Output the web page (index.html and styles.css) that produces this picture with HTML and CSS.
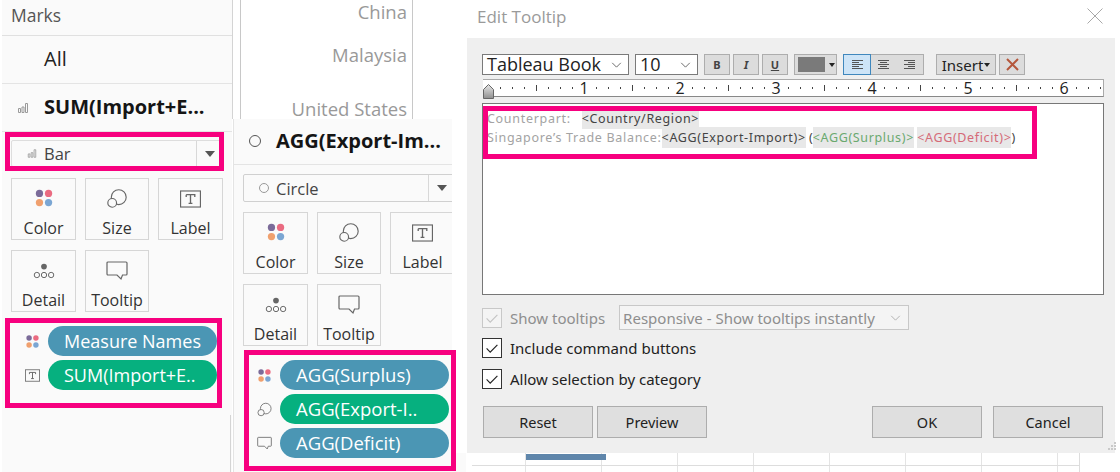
FILE: index.html
```html
<!DOCTYPE html>
<html lang="en">
<head>
<meta charset="utf-8">
<title>Edit Tooltip</title>
<link rel="stylesheet" href="styles.css">
</head>
<body>
<svg class="defs" width="0" height="0" aria-hidden="true">
  <defs>
    <symbol id="i-bar" viewBox="0 0 12 10"><path d="M1.5 5.5h2v4h-2zM5 4h2v5.500h-2zM8.500 .5h2v9h-2z" fill="none" stroke="#9a9a9a"/></symbol>
    <symbol id="i-color" viewBox="0 0 22 22"><circle cx="6" cy="6" r="4" fill="#7b6b99"/><circle cx="16" cy="6" r="4" fill="#ea6b81"/><circle cx="6" cy="16" r="4" fill="#f0a06e"/><circle cx="16" cy="16" r="4" fill="#7ba6d3"/></symbol>
    <symbol id="i-size" viewBox="0 0 24 24"><circle cx="14" cy="10.500" r="8.500" fill="none" stroke="#666" stroke-width="1.300"/><circle cx="6.500" cy="17" r="5" fill="#fafafa" stroke="#666" stroke-width="1.300"/></symbol>
    <symbol id="i-label" viewBox="0 0 22 18"><rect x=".6" y=".6" width="20.800" height="16.800" fill="none" stroke="#666" stroke-width="1.200"/><path d="M6.500 4.500h9v2.500M6.500 7V4.500M11 4.500v9M9 13.500h4" fill="none" stroke="#666" stroke-width="1.400"/></symbol>
    <symbol id="i-detail" viewBox="0 0 24 18"><circle cx="12" cy="4" r="3.200" fill="#666"/><circle cx="4" cy="13.500" r="3" fill="none" stroke="#666" stroke-width="1.100"/><circle cx="12" cy="13.500" r="3" fill="none" stroke="#666" stroke-width="1.100"/><circle cx="20" cy="13.500" r="3" fill="none" stroke="#666" stroke-width="1.100"/></symbol>
    <symbol id="i-tooltip" viewBox="0 0 22 20"><path d="M2 1h18a1 1 0 0 1 1 1v11a1 1 0 0 1-1 1h-3.500l-1.500 4-4-4H2a1 1 0 0 1-1-1V2a1 1 0 0 1 1-1z" fill="none" stroke="#666" stroke-width="1.200"/></symbol>
    <symbol id="i-check" viewBox="0 0 20 20"><path d="M4 10.500l4 4 8-8" fill="none" stroke="currentColor" stroke-width="1.300"/></symbol>
    <symbol id="i-chev" viewBox="0 0 12 7"><path d="M1 1l5 5 5-5" fill="none" stroke="currentColor" stroke-width="1"/></symbol>
  </defs>
</svg>

<main class="canvas">
  <section class="marks marks-one">
    <div class="marks-title">Marks</div>
    <div class="marks-row">All</div>
    <div class="marks-row marks-row-bold"><svg class="row-icon"><use href="#i-bar"/></svg>SUM(Import+E...</div>
    <div class="marks-body">
      <div class="mark-select"><svg class="sel-icon"><use href="#i-bar"/></svg><span class="sel-text">Bar</span><span class="sel-arrow"></span></div>
      <div class="mark-grid">
        <div class="mark-btn"><svg class="mi mi-color"><use href="#i-color"/></svg>Color</div>
        <div class="mark-btn"><svg class="mi mi-size"><use href="#i-size"/></svg>Size</div>
        <div class="mark-btn"><svg class="mi mi-label"><use href="#i-label"/></svg>Label</div>
        <div class="mark-btn"><svg class="mi mi-detail"><use href="#i-detail"/></svg>Detail</div>
        <div class="mark-btn"><svg class="mi mi-tooltip"><use href="#i-tooltip"/></svg>Tooltip</div>
      </div>
      <div class="pills pills-one">
        <div class="pill-row"><svg class="pi"><use href="#i-color"/></svg><span class="pill pill-blue">Measure Names</span></div>
        <div class="pill-row"><svg class="pi"><use href="#i-label"/></svg><span class="pill pill-green">SUM(Import+E..</span></div>
      </div>
    </div>
  </section>

  <section class="axis">
    <div class="axis-label axis-china">China</div>
    <div class="axis-label axis-malaysia">Malaysia</div>
    <div class="axis-label axis-us">United States</div>
  </section>

  <section class="marks marks-two">
    <div class="marks-row marks-row-bold marks-row-first"><span class="ring"></span>AGG(Export-Im...</div>
    <div class="marks-body">
      <div class="mark-select"><span class="sel-ring"></span><span class="sel-text">Circle</span><span class="sel-arrow"></span></div>
      <div class="mark-grid">
        <div class="mark-btn"><svg class="mi mi-color"><use href="#i-color"/></svg>Color</div>
        <div class="mark-btn"><svg class="mi mi-size"><use href="#i-size"/></svg>Size</div>
        <div class="mark-btn"><svg class="mi mi-label"><use href="#i-label"/></svg>Label</div>
        <div class="mark-btn"><svg class="mi mi-detail"><use href="#i-detail"/></svg>Detail</div>
        <div class="mark-btn"><svg class="mi mi-tooltip"><use href="#i-tooltip"/></svg>Tooltip</div>
      </div>
      <div class="pills pills-two">
        <div class="pill-row"><svg class="pi"><use href="#i-color"/></svg><span class="pill pill-blue">AGG(Surplus)</span></div>
        <div class="pill-row"><svg class="pi"><use href="#i-size"/></svg><span class="pill pill-green">AGG(Export-I..</span></div>
        <div class="pill-row"><svg class="pi"><use href="#i-tooltip"/></svg><span class="pill pill-blue">AGG(Deficit)</span></div>
      </div>
    </div>
  </section>

  <section class="sheet">
    <div class="sheet-bar"></div>
    <div class="sheet-line"></div>
  </section>

  <section class="dialog">
    <header class="dialog-head">
      <span class="dialog-title">Edit Tooltip</span>
      <svg class="dialog-close" viewBox="0 0 16 16"><path d="M.5.500l15 15M15.500.500l-15 15" stroke="#a8a8a8" stroke-width="1" fill="none"/></svg>
    </header>
    <div class="dialog-body">
      <div class="toolbar">
        <div class="tb-select tb-font"><span>Tableau Book</span><svg class="chev"><use href="#i-chev"/></svg></div>
        <div class="tb-select tb-size"><span>10</span><svg class="chev"><use href="#i-chev"/></svg></div>
        <div class="tb-btn tb-b">B</div>
        <div class="tb-btn tb-i">I</div>
        <div class="tb-btn tb-u">U</div>
        <div class="tb-color"><span class="swatch"></span><span class="caret"></span></div>
        <div class="tb-align">
          <span class="al al-active"><svg viewBox="0 0 11 9"><path d="M0 .5h11M0 2.500h7M0 4.500h11M0 6.500h7M0 8.500h11" stroke="#555"/></svg></span>
          <span class="al"><svg viewBox="0 0 11 9"><path d="M0 .5h11M2 2.500h7M0 4.500h11M2 6.500h7M0 8.500h11" stroke="#555"/></svg></span>
          <span class="al"><svg viewBox="0 0 11 9"><path d="M0 .5h11M4 2.500h7M0 4.500h11M4 6.500h7M0 8.500h11" stroke="#555"/></svg></span>
        </div>
        <div class="tb-insert">Insert<span class="caret"></span></div>
        <div class="tb-del"><svg viewBox="0 0 13 13"><path d="M1 1l11 11M12 1L1 12" stroke="#b5573c" stroke-width="2"/></svg></div>
      </div>
      <svg class="ruler">
        <defs>
          <pattern id="ticks" x="5" y="0" width="96" height="16" patternUnits="userSpaceOnUse">
            <path d="M12.500 7v2M24.500 7v2M36.500 7v2M60.500 7v2M72.500 7v2M84.500 7v2" stroke="#444"/>
            <path d="M48.500 5v6" stroke="#444"/>
          </pattern>
          <linearGradient id="marker" x1="0" y1="0" x2="0" y2="1"><stop offset="0" stop-color="#e8e8e8"/><stop offset="1" stop-color="#8f8f8f"/></linearGradient>
        </defs>
        <rect x="5" width="616" height="16" fill="url(#ticks)"/>
        <g class="ruler-num">
          <rect x="93" y="1" width="16" height="14" fill="#fff"/><rect x="189" y="1" width="16" height="14" fill="#fff"/><rect x="285" y="1" width="16" height="14" fill="#fff"/><rect x="381" y="1" width="16" height="14" fill="#fff"/><rect x="477" y="1" width="16" height="14" fill="#fff"/><rect x="573" y="1" width="16" height="14" fill="#fff"/>
          <text x="101" y="14">1</text><text x="197" y="14">2</text><text x="293" y="14">3</text><text x="389" y="14">4</text><text x="485" y="14">5</text><text x="581" y="14">6</text>
        </g>
        <path d="M5 4.500l5 5v9h-10v-9z" transform="translate(.5 0)" fill="url(#marker)" stroke="#666"/>
      </svg>
      <div class="editor">
        <div class="ed-line"><span class="ed-gray">Counterpart:</span><span class="ed-gap"></span><span class="ed-field">&lt;Country/Region&gt;</span></div>
        <div class="ed-line"><span class="ed-gray">Singapore’s Trade Balance:</span><span class="ed-field">&lt;AGG(Export-Import)&gt;</span><span class="ed-dark"> (</span><span class="ed-field ed-green">&lt;AGG(Surplus)&gt;</span><span class="ed-dark"> </span><span class="ed-field ed-red">&lt;AGG(Deficit)&gt;</span><span class="ed-dark">)</span></div>
      </div>
      <div class="opt opt-first">
        <span class="check check-off"><svg><use href="#i-check"/></svg></span>
        <span class="opt-text opt-muted">Show tooltips</span>
        <div class="resp"><span>Responsive - Show tooltips instantly</span><svg class="chev"><use href="#i-chev"/></svg></div>
      </div>
      <div class="opt opt-second"><span class="check"><svg><use href="#i-check"/></svg></span><span class="opt-text">Include command buttons</span></div>
      <div class="opt opt-third"><span class="check"><svg><use href="#i-check"/></svg></span><span class="opt-text">Allow selection by category</span></div>
      <div class="actions">
        <div class="act">Reset</div>
        <div class="act">Preview</div>
        <div class="act act-ok">OK</div>
        <div class="act">Cancel</div>
      </div>
    </div>
    <svg class="grip" viewBox="0 0 10 10"><path d="M8 1h2v2H8zM5 4h2v2H5zM8 4h2v2H8zM2 7h2v2H2zM5 7h2v2H5zM8 7h2v2H8z" fill="#c9c9c9"/></svg>
  </section>

  <div class="mk mk-1"></div>
  <div class="mk mk-2"></div>
  <div class="mk mk-3"></div>
  <div class="mk mk-4"></div>
</main>
</body>
</html>
```
FILE: styles.css
```css
* { box-sizing: border-box; }
html, body { margin: 0; padding: 0; background: #fff; }
.defs { position: absolute; }
.canvas {
  position: relative;
  width: 1120px;
  height: 472px;
  overflow: hidden;
  background: #fff;
  font-family: "Open Sans", "Liberation Sans", sans-serif;
}

/* Marks cards */
.marks { position: absolute; background: #fafafa; color: #2b2b2b; }
.marks-one { left: 2px; top: 0; width: 230px; height: 472px; }
.marks-one::before { content: ""; position: absolute; right: -1px; top: 0; height: 119px; border-right: 1px solid #d4d4d4; }
.marks-one::after { content: ""; position: absolute; right: 1px; top: 415px; bottom: 0; border-right: 1px solid #d4d4d4; }
.marks-two { left: 233px; top: 119px; width: 233px; height: 353px; border-left: 1px solid #e4e4e4; }
.marks-title { height: 36px; padding: 3px 0 0 9px; font-size: 17.500px; line-height: 24px; color: #555; border-bottom: 1px solid #e0e0e0; }
.marks-row { height: 48px; padding-left: 42px; font-size: 20px; line-height: 46px; color: #222; border-bottom: 1px solid #e4e4e4; position: relative; }
.marks-row-bold { font-weight: 700; color: #151515; }
.marks-row-first { height: 46px; line-height: 44px; }
.row-icon { position: absolute; left: 15px; top: 19px; width: 12px; height: 10px; }
.ring { position: absolute; left: 15px; top: 16px; width: 12px; height: 12px; border: 1.500px solid #555; border-radius: 50%; }
.marks-body { padding: 9px 9px 0; }
.marks-one .marks-body { padding-top: 8px; }
.mark-select {
  position: relative;
  display: flex;
  align-items: center;
  width: 212px;
  height: 28px;
  border: 1px solid #d0d0d0;
  border-radius: 2px;
  background: #fafafa;
}
.marks-one .mark-select { height: 27px; border-color: #ddd; }
.sel-icon { width: 10px; height: 9px; margin-left: 15px; }
.sel-ring { width: 10px; height: 10px; margin-left: 15px; border: 1px solid #999; border-radius: 50%; }
.sel-text { margin-left: 7px; font-size: 16.500px; color: #444; }
.sel-arrow { position: absolute; right: 0; top: 0; bottom: 0; width: 26px; border-left: 1px solid #d8d8d8; }
.sel-arrow::after { content: ""; position: absolute; left: 8px; top: 10px; border: 5px solid transparent; border-top: 6px solid #555; border-bottom: 0; }
.mark-grid { display: grid; grid-template-columns: 65px 64px 65px; column-gap: 9px; row-gap: 10px; margin-top: 10px; }
.marks-one .mark-grid { margin-top: 11px; }
.mark-btn {
  display: flex;
  flex-direction: column;
  align-items: center;
  justify-content: flex-end;
  height: 62px;
  padding-bottom: 0;
  border: 1px solid #d6d6d6;
  font-size: 16px;
  line-height: 22px;
  color: #333;
}
.mi { flex: none; }
.mi-color { width: 20px; height: 20px; margin-bottom: 9px; }
.mi-size { width: 22px; height: 21px; margin-bottom: 8px; }
.mi-label { width: 21px; height: 18px; margin-bottom: 9px; }
.mi-detail { width: 24px; height: 16px; margin-bottom: 10px; }
.mi-tooltip { width: 22px; height: 20px; margin-bottom: 8px; }
.pills { display: flex; flex-direction: column; gap: 4px; }
.pills-one { margin-top: 14px; }
.pills-two { margin-top: 14px; }
.pill-row { display: flex; align-items: center; }
.pi { flex: none; width: 15px; height: 15px; margin: 0 8px 0 14px; }
.pill {
  flex: none;
  width: 169px;
  height: 30px;
  padding-left: 16px;
  border-radius: 15px;
  color: #fff;
  font-size: 18px;
  line-height: 30px;
}
.pills-two .pill { font-size: 18.500px; }
.pill-blue { background: #4b96b4; }
.pill-green { background: #06b07f; }

/* Chart axis */
.axis { position: absolute; left: 240px; top: 0; width: 173px; height: 120px; border-left: 1px solid #c8c8c8; border-right: 1px solid #c8c8c8; }
.axis-label { position: absolute; right: 5px; font-size: 18.500px; line-height: 24px; color: #999; }
.axis-china { top: 0; }
.axis-malaysia { top: 43px; }
.axis-us { top: 97px; }

/* Sheet behind dialog */
.sheet {
  position: absolute;
  left: 472px;
  top: 453px;
  width: 608px;
  height: 19px;
  background: repeating-linear-gradient(90deg, transparent 0 53px, #e4e4e4 53px 54px, transparent 54px 76px);
  border-right: 1px solid #ddd;
}
.sheet-bar { width: 80px; height: 6px; margin: 1px 0 0 54px; background: #5f86ab; }
.sheet-line { margin-top: 5px; border-top: 1px solid #ddd; }

/* Dialog */
.dialog { position: absolute; left: 452px; top: 0; width: 663px; height: 453px; background: #fff; }
.dialog-head { position: relative; height: 38px; padding: 4px 0 0 25px; }
.dialog-title { font-size: 17px; line-height: 26px; color: #9a9a9a; }
.dialog-close { position: absolute; right: 12px; top: 8px; width: 16px; height: 16px; }
.dialog-body { height: 415px; margin-left: 15px; padding: 16px 0 0 15px; background: #efefef; font-family: "Noto Sans", "Open Sans", sans-serif; color: #222; }
.grip { position: absolute; right: -1px; bottom: 2px; width: 10px; height: 10px; }

.toolbar { display: flex; align-items: stretch; height: 21px; color: #222; }
.tb-select { display: flex; align-items: center; justify-content: space-between; background: #fff; border: 1px solid #7a7a7a; padding: 0 6px 0 4px; font-size: 18px; line-height: 19px; }
.tb-font { width: 147px; font-family: "Open Sans", sans-serif; }
.tb-size { width: 63px; margin-left: 6px; font-family: "Open Sans", sans-serif; }
.chev { width: 11px; height: 6px; color: #555; flex: none; }
.tb-btn { width: 26px; margin-left: 3px; display: flex; align-items: center; justify-content: center; background: #dcdcdc; border: 1px solid #adadad; font-size: 11px; font-weight: 700; color: #444; }
.tb-b { margin-left: 6px; }
.tb-i { font-style: italic; }
.tb-u { text-decoration: underline; }
.tb-color { width: 43px; margin-left: 6px; display: flex; align-items: center; gap: 4px; padding-left: 3px; background: #dcdcdc; border: 1px solid #adadad; }
.swatch { width: 27px; height: 15px; background: #7a7a7a; }
.caret { display: inline-block; border: 3px solid transparent; border-top: 4px solid #222; border-bottom: 0; }
.tb-align { display: flex; width: 81px; margin-left: 6px; background: #dcdcdc; border: 1px solid #adadad; }
.al { flex: 1; display: flex; align-items: center; justify-content: center; }
.al svg { width: 11px; height: 9px; }
.al-active { background: #cde4f7; outline: 1px solid #3f87bd; }
.tb-insert { width: 60px; margin-left: 12px; display: flex; align-items: center; justify-content: center; gap: 1px; background: #dcdcdc; border: 1px solid #adadad; font-size: 15px; }
.tb-del { width: 26px; margin-left: 3px; display: flex; align-items: center; justify-content: center; background: #dcdcdc; border: 1px solid #adadad; }
.tb-del svg { width: 13px; height: 13px; }

.ruler { display: block; width: 621px; height: 18px; margin: 4px 0 0 1px; background: #fff; border-top: 1px solid #aaa; border-bottom: 1px solid #888; border-right: 1px solid #aaa; overflow: visible; }
.ruler-num text { font-family: "Open Sans", sans-serif; font-size: 16px; fill: #222; text-anchor: middle; }

.editor { width: 622px; height: 192px; margin-top: 6px; padding: 5px 4px; background: #fff; border: 1px solid #777; font-family: "Noto Sans", sans-serif; font-size: 12.500px; line-height: 19px; }
.ed-line { height: 19px; white-space: pre; }
.ed-gray { color: #a3a3a3; letter-spacing: .7px; }
.ed-gap { display: inline-block; width: 11px; }
.ed-field { background: #e8e8e8; color: #444; padding: 2px 0; letter-spacing: .65px; }
.ed-green { color: #6aa96f; }
.ed-red { color: #d56b78; }
.ed-dark { color: #444; }

.opt { display: flex; align-items: center; font-size: 15px; line-height: 20px; }
.opt-first { margin-top: 10px; height: 25px; }
.opt-second { margin-top: 8px; height: 20px; }
.opt-third { margin-top: 11px; height: 20px; }
.check { width: 20px; height: 20px; background: #fff; border: 1px solid #333; color: #222; display: flex; }
.check svg { width: 18px; height: 18px; }
.check-off { border-color: #c8c8c8; color: #c4c4c4; background: #f4f4f4; }
.opt-text { margin-left: 8px; }
.opt-muted { color: #8e8e8e; }
.resp { display: flex; align-items: center; justify-content: space-between; width: 290px; height: 25px; margin-left: 14px; padding: 0 7px 0 3px; border: 1px solid #c8c8c8; background: #f4f4f4; color: #8e8e8e; }
.resp .chev { color: #aaa; }

.actions { display: flex; gap: 4px; margin: 17px 0 0 1px; }
.act { width: 110px; height: 32px; display: flex; align-items: center; justify-content: center; background: #dfdfdf; border: 1px solid #adadad; font-size: 14.500px; color: #222; }
.act-ok { margin-left: 161px; margin-right: 7px; }

/* Annotations */
.mk { position: absolute; border: 5px solid #f7007f; }
.mk-1 { left: 5px; top: 132px; width: 219px; height: 39px; }
.mk-2 { left: 5px; top: 318px; width: 217px; height: 90px; }
.mk-3 { left: 244px; top: 350px; width: 212px; height: 121px; }
.mk-4 { left: 483px; top: 106px; width: 554px; height: 53px; }
```
